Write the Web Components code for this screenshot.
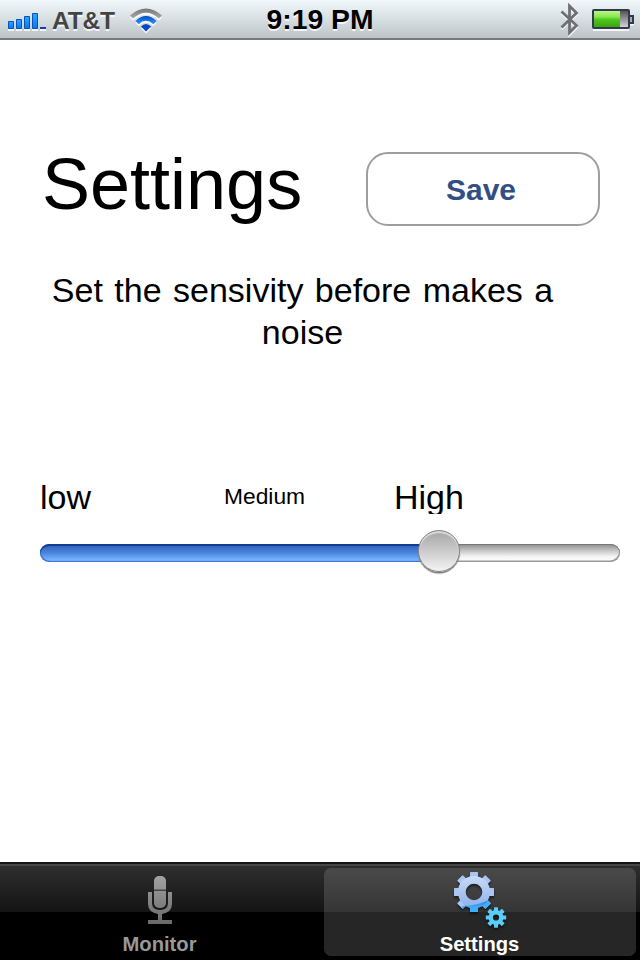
<!DOCTYPE html>
<html lang="en">
<head>
<meta charset="utf-8">
<title>Settings</title>
<style>
html,body{margin:0;padding:0;background:#fff}
body{width:640px;height:960px;overflow:hidden;font-family:"Liberation Sans",Arial,sans-serif;color:#000}
</style>
</head>
<body>
<noise-app></noise-app>
<script>
const define = (name, html) => {
  const t = document.createElement('template');
  t.innerHTML = html;
  customElements.define(name, class extends HTMLElement {
    constructor() {
      super();
      this.attachShadow({ mode: 'open' }).append(t.content.cloneNode(true));
    }
  });
};

define('signal-icon', `<style>:host{display:block;width:40px;height:20px}svg{display:block}</style>
<svg width="40" height="20" viewBox="0 0 40 20">
<defs><linearGradient id="g" x1="0" x2="0" y1="0" y2="1"><stop offset="0" stop-color="#27a8ff"/><stop offset="1" stop-color="#0877f2"/></linearGradient></defs>
<path fill="#fff" opacity=".8" d="M0 17h6v2H0zM8 17h6v2H8zM16 17h6v2h-6zM24 17h6v2h-6zM32 17h6v2h-6z"/>
<g fill="url(#g)" stroke="#0b50b8" stroke-width="1"><path d="M.5 9.500h5v7h-5z"/><path d="M8.500 7.500h5v9h-5z"/><path d="M16.500 4.500h5v12h-5z"/><path d="M24.500 1.500h5v15h-5z"/></g><path fill="#0b3fc0" d="M32 15h6v2h-6z"/></svg>`);

define('wifi-icon', `<style>:host{display:block;width:34px;height:26px}svg{display:block}</style>
<svg width="34" height="26" viewBox="0 0 34 26">
<defs><linearGradient id="a" x1="0" x2="0" y1="0" y2="1"><stop offset="0" stop-color="#777"/><stop offset="1" stop-color="#aaa"/></linearGradient>
<linearGradient id="b" x1="0" x2="0" y1="0" y2="1"><stop offset="0" stop-color="#0648c4"/><stop offset="1" stop-color="#2a9cff"/></linearGradient></defs>
<g fill="#fff" opacity=".85" transform="translate(0 2)"><path d="M1 7.500Q17-6.500 33 7.500L30 10.500Q17-1 4 10.500Z"/><path d="M6.500 13Q17 3 27.500 13L24.300 16.200Q17 9.500 9.700 16.200Z"/><path d="M12 18.500Q17 13.500 22 18.500L17 23.500Z"/></g>
<path fill="url(#a)" d="M1 7.500Q17-6.500 33 7.500L30 10.500Q17-1 4 10.500Z"/>
<path fill="url(#b)" d="M6.500 13Q17 3 27.500 13L24.300 16.200Q17 9.500 9.700 16.200Z"/>
<path fill="#0648c4" d="M12 18.500Q17 13.500 22 18.500L17 23.500Z"/></svg>`);

define('bluetooth-icon', `<style>:host{display:block;width:20px;height:34px}svg{display:block}</style>
<svg width="20" height="34" viewBox="0 0 20 34" fill="none" stroke-width="2.800">
<path stroke="#fff" opacity=".8" d="M1.500 10L16.500 24.500 9.500 31.500V4.500L16.500 11.500 1.500 26"/>
<path stroke="#6e7173" d="M1.500 8.500L16.500 22.500 9.500 29.500V3L16.500 10 1.500 24.500"/></svg>`);

define('battery-icon', `<style>:host{display:block;width:42px;height:24px}svg{display:block}</style>
<svg width="42" height="24" viewBox="0 0 42 24">
<defs><linearGradient id="g" x1="0" x2="0" y1="0" y2="1"><stop offset="0" stop-color="#baf58c"/><stop offset=".35" stop-color="#8be850"/><stop offset=".55" stop-color="#4cc61c"/><stop offset="1" stop-color="#3aa60e"/></linearGradient>
<linearGradient id="e" x1="0" x2="0" y1="0" y2="1"><stop offset="0" stop-color="#555"/><stop offset="1" stop-color="#d2d2d2"/></linearGradient></defs>
<path fill="#fff" opacity=".8" d="M1 20h36v2H1zM38 15h4v1.500h-4z"/>
<rect x="1" y="1" width="36" height="18" rx="1" fill="#d9ecd4" stroke="#32384e" stroke-width="2"/>
<path fill="url(#g)" d="M2 2h26v16H2z"/><path fill="url(#e)" d="M28 2h8v16h-8z"/>
<path fill="none" stroke="#32384e" stroke-width="2" d="M38 7h3v7h-3"/><path fill="#aaa" d="M38 8h2v5h-2z"/></svg>`);

define('status-bar', `<style>
:host{box-sizing:border-box;display:grid;grid-template-columns:1fr 120px 1fr;height:40px;background:linear-gradient(#f1f8fc,#d8dfe3 50%,#bcc4c8);border-bottom:2px solid #74797d;font-weight:bold}
.l,.r{display:flex;align-items:flex-start}
.l{padding-left:8px}
.r{justify-content:flex-end;padding-right:6px}
span,.t{text-shadow:0 2px 0 rgba(255,255,255,.8);white-space:nowrap}
span{font-size:24.500px;line-height:42px;color:#444;margin-left:4px;width:66px;letter-spacing:-.2px}
.t{font-size:28.300px;line-height:38px;text-align:center}
signal-icon{margin-top:12px}wifi-icon{margin:8px 0 0 11px}
bluetooth-icon{margin:3px 12px 0 0}battery-icon{margin-top:9px}
</style>
<div class="l"><signal-icon></signal-icon><span>AT&amp;T</span><wifi-icon></wifi-icon></div>
<div class="t">9:19 PM</div>
<div class="r"><bluetooth-icon></bluetooth-icon><battery-icon></battery-icon></div>`);

define('round-button', `<style>:host{display:block}
button{box-sizing:border-box;display:block;width:234px;height:74px;padding:2px 4px 0 0;border:2px solid #9e9e9e;border-radius:22px;background:#fff;font:bold 30px/68px "Liberation Sans",Arial,sans-serif;color:#324f85}</style>
<button><slot></slot></button>`);

define('level-slider', `<style>
:host{display:block}
.row{display:flex;align-items:center;height:44px;width:580px}
.f,.e{height:18px;box-sizing:border-box}
.f{width:399px;border-radius:9px 0 0 9px;background:linear-gradient(#2c5fb2,#4a86dc 50%,#78b2ff 88%,#5f9cf0);box-shadow:inset 0 2px 0 #0f3d93,inset 1px -1px 0 #3e78cf}
.e{width:181px;border-radius:0 9px 9px 0;background:linear-gradient(#8c8c8c,#c4c4c4 35%,#f4f4f4 70%,#fff);box-shadow:inset 0 1px 0 #777,inset -1px -1.500px 0 #999}
.k{box-sizing:border-box;flex:none;width:42px;height:42px;margin:-4px -21px 0;border-radius:50%;background:linear-gradient(#a6a6a6,#cbcbcb 50%,#f4f4f4);border:1px solid #858585;box-shadow:inset 0 2px 1px #ddd,inset 0 -1px 1px #eee,0 1.500px 1px #777;position:relative}
</style><div class="row"><div class="f"></div><div class="k"></div><div class="e"></div></div>`);

define('mic-icon', `<style>:host{display:block;width:28px;height:50px}svg{display:block}</style>
<svg width="28" height="50" viewBox="0 0 28 50">
<defs><linearGradient id="g" gradientUnits="userSpaceOnUse" x1="0" x2="0" y1="0" y2="50"><stop offset="0" stop-color="#a5a5a5"/><stop offset="1" stop-color="#686868"/></linearGradient></defs>
<rect x="8" y="2" width="12" height="32" rx="5" fill="url(#g)"/><path d="M8 15.500h12v1.500H8z" fill="#444"/>
<path d="M2 18h4v11q0 7 8 7t8-7V18h4v12q0 8-10 10v6h10v4H2v-4h10v-6Q2 38 2 30z" fill="url(#g)"/></svg>`);

const teeth = (r, w, h) => [0, 45, 90, 135, 180, 225, 270, 315]
  .map(a => `<rect x="${-w / 2}" y="${-r}" width="${w}" height="${h}" rx=".6" transform="rotate(${a})"/>`).join('');

define('gears-icon', `<style>:host{display:block;width:54px;height:58px}svg{display:block;filter:drop-shadow(0 2px 1px rgba(0,0,0,.55))}</style>
<svg width="54" height="58" viewBox="0 0 54 58">
<defs><linearGradient id="g" gradientUnits="userSpaceOnUse" x1="0" x2="0" y1="-20" y2="20"><stop offset="0" stop-color="#cfe0fb"/><stop offset="1" stop-color="#86abe9"/></linearGradient>
<linearGradient id="b" gradientUnits="userSpaceOnUse" x1="0" x2="0" y1="8" y2="20"><stop offset="0" stop-color="#2580ec"/><stop offset="1" stop-color="#55c6ff"/></linearGradient>
<clipPath id="c"><path d="M-12 14Q4 14 19 6V22H-12z"/></clipPath></defs>
<g transform="translate(20 20)">
<g fill="#a9c5f2">${teeth(20, 8, 7)}</g>
<circle r="12.200" fill="none" stroke="url(#g)" stroke-width="7.800"/>
<g clip-path="url(#c)"><g fill="#42aefb">${teeth(20, 8, 7)}</g><circle r="12.200" fill="none" stroke="url(#b)" stroke-width="7.800"/></g></g>
<g transform="translate(42 45.500)" fill="#5bcdfa">${teeth(10.200, 4, 4)}<circle r="5.300" fill="none" stroke="#5bcdfa" stroke-width="4.400"/></g></svg>`);

define('tab-item', `<style>
:host{box-sizing:border-box;display:flex;flex-direction:column;align-items:center;height:88px;border-radius:7px;color:#999;font:bold 20.200px/24px "Liberation Sans",Arial,sans-serif}
:host([selected]){background:linear-gradient(#4a4a4a,#353535 44px,#262626 44px);color:#fff}
.i{height:67px;display:flex}.t{margin-left:-1px}
</style><div class="i"><slot name="icon"></slot></div><div class="t"><slot></slot></div>`);

define('tab-bar', `<style>
:host{box-sizing:border-box;display:grid;grid-template-columns:312px 312px;column-gap:8px;padding:6px 4px 4px;height:98px;background:linear-gradient(#151515 2px,#464646 2px,#464646 4px,#2e2e2e 4px,#141414 50px,#000 50px)}
</style><slot></slot>`);

define('noise-app', `<style>
:host{display:flex;flex-direction:column;width:640px;height:960px;background:#fff}
main{flex:1;display:flex;flex-direction:column}
.h{display:flex;margin:104px 40px 0 42px;justify-content:space-between;height:82px}
h1{margin:0;font-size:72px;line-height:80px;font-weight:normal}
round-button{margin-top:8px}
p{margin:43px 0 0 40px;width:525px;text-align:center;font-size:34px;line-height:42px;word-spacing:2px}
.labels{display:flex;margin:125px 0 0 40px;height:36px;font-size:34px}
.labels div{box-sizing:border-box;height:36px;padding-top:2px;line-height:34px}
.low{width:184px}.labels .med{width:170px;font-size:22.800px;line-height:33px}.high{overflow:hidden}
level-slider{margin:17px 0 0 40px}
mic-icon{margin-top:6px}gears-icon{margin:4px 0 0 1px}
</style>
<status-bar></status-bar>
<main><div class="h"><h1>Settings</h1><round-button>Save</round-button></div>
<p>Set the sensivity before makes a noise</p>
<div class="labels"><div class="low">low</div><div class="med">Medium</div><div class="high">High</div></div>
<level-slider></level-slider></main>
<tab-bar><tab-item><mic-icon slot="icon"></mic-icon>Monitor</tab-item><tab-item selected><gears-icon slot="icon"></gears-icon>Settings</tab-item></tab-bar>`);
</script>
</body>
</html>
